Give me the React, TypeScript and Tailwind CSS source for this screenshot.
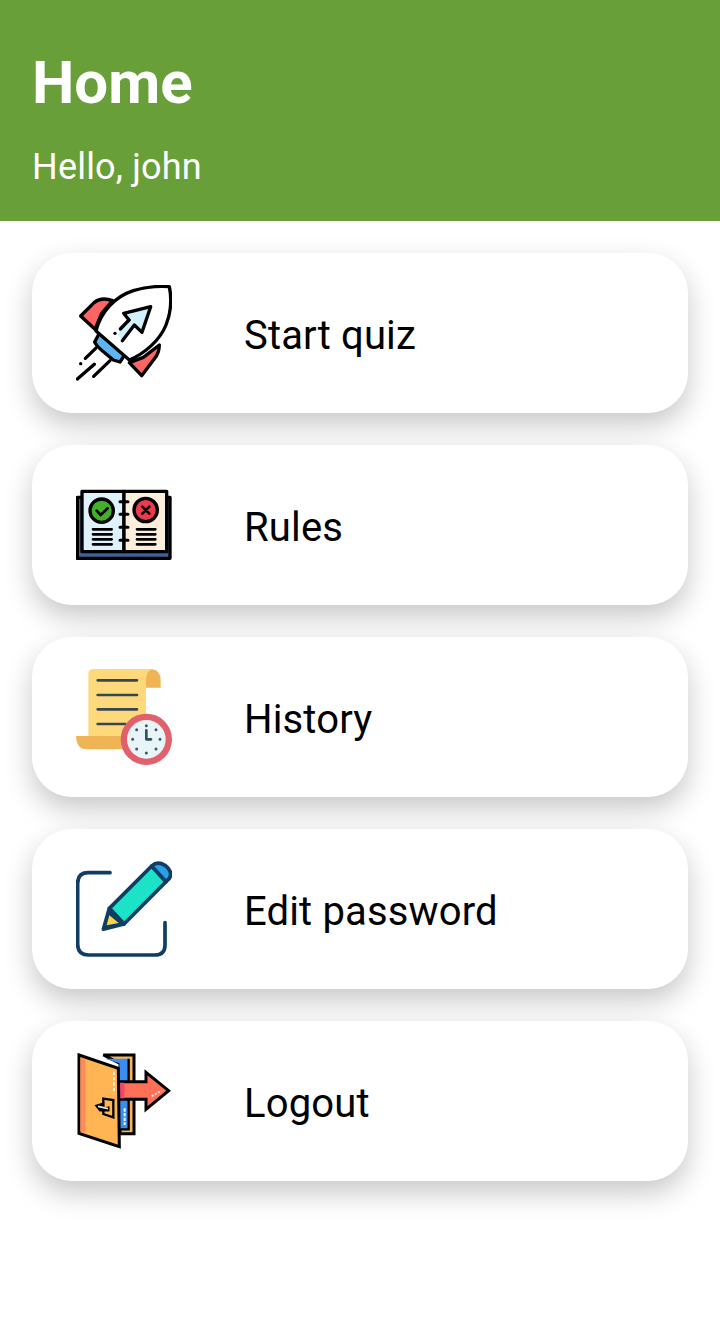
import React from 'react'

const RocketIcon = () => (
  <svg className="h-24 w-24 shrink-0" viewBox="48 45 288 288" fill="none" stroke="#000" strokeWidth="10" strokeLinecap="round" strokeLinejoin="round">
    <path d="M62 138 L103 97 Q125 80 158 92 L125 130 L105 178 Z" fill="#ff6464" />
    <path d="M298 225 Q298 250 282 268 L245 317 L208 278 L250 262 Z" fill="#ff6464" />
    <path d="M118 190 L104 216 Q110 230 124 240 L160 270 L180 276 L197 250 Z" fill="#5cb4f2" />
    <path d="M108 183 C122 125 165 80 220 62 C260 50 300 48 328 50 C336 90 332 130 318 165 C300 210 255 250 208 270 Z" fill="#fff" />
    <path d="M195 130 L271 112 L247 186 L226 165 L185 208 L172 195 L207 152 Z" fill="#d2f1fd" stroke="none" />
    <path d="M207 150 L191 130 L272 110 L246 187 L223 165 L187 212" />
    <path d="M207 150 L181 177" />
    <path d="M165 190 L165 190" />
    <path d="M107 235 L76 265" />
    <path d="M62 281 L62 281" />
    <path d="M103 283 L52 327" />
    <path d="M150 272 L101 319" />
  </svg>
)

const BookIcon = () => (
  <svg className="h-24 w-24 shrink-0" viewBox="48 21 288 288" fill="none" stroke="#000" strokeWidth="10" strokeLinecap="round" strokeLinejoin="round">
    <path d="M52 82 H330 V265 H52 Z" fill="#3d6199" />
    <path d="M66 64 H192 V245 H66 Z" fill="#dff2fc" />
    <path d="M192 64 H320 V245 H192 Z" fill="#fdeedb" />
    <circle cx="125" cy="122" r="35" fill="#43b02a" />
    <path d="M110 122 L122 135 L143 115" strokeWidth="8" fill="none" />
    <circle cx="257" cy="120" r="35" fill="#ed3a4c" />
    <path d="M247 110 L268 131 M268 110 L247 131" strokeWidth="8" />
    <path d="M99 178 H155 M99 193 H155 M99 208 H155 M99 223 H155" strokeWidth="8" />
    <path d="M231 178 H286 M231 193 H286 M231 208 H286 M231 223 H286" strokeWidth="8" />
    <path d="M180 95 H204 M180 133 H204 M180 172 H204 M180 211 H204" strokeWidth="9" />
  </svg>
)

const HistoryIcon = () => (
  <svg className="h-24 w-24 shrink-0" viewBox="48 42 288 288" fill="none" strokeLinecap="round">
    <path d="M275 42 Q302 46 302 75 V98 H258 V70 Q258 48 275 42 Z" fill="#f0b455" />
    <path d="M100 42 H278 Q258 48 258 72 V243 H85 V58 Q85 42 100 42 Z" fill="#fdd97c" />
    <path d="M48 243 H195 V283 H80 Q50 283 48 243 Z" fill="#f0b455" />
    <path d="M113 76 H231 M113 120 H231 M113 163 H231 M113 207 H196" stroke="#37474f" strokeWidth="8" />
    <circle cx="259" cy="253" r="77" fill="#e0606c" />
    <circle cx="259" cy="253" r="58" fill="#e9f4f7" />
    <path d="M259 212 V212 M259 294 V294 M218 253 V253 M300 253 V253 M230 224 V224 M288 224 V224 M230 282 V282 M288 282 V282" stroke="#37596b" strokeWidth="9" />
    <path d="M259 226 V253 H273" stroke="#2d5166" strokeWidth="8" strokeLinejoin="round" />
  </svg>
)

const EditIcon = () => (
  <svg className="h-24 w-24 shrink-0" viewBox="48 33 288 288" fill="none" stroke="#0f3d63" strokeWidth="11" strokeLinecap="round" strokeLinejoin="round">
    <path d="M150 68 H85 Q53 68 53 100 V283 Q53 315 85 315 H285 Q315 315 315 285 V218" />
    <path d="M148 175 L275 48 L318 95 L192 222 Z" fill="#1ce3c8" />
    <path d="M275 48 Q292 32 315 46 Q340 65 328 85 L318 95 Z" fill="#2aa0e8" />
    <path d="M148 175 L130 238 L192 222 Z" fill="#0f3d63" />
    <path d="M148 196 L140 226 L176 219 Z" fill="#f9d648" stroke="none" />
  </svg>
)

const LogoutIcon = () => (
  <svg className="h-24 w-24 shrink-0" viewBox="48 39 288 288" fill="none" stroke="#000" strokeWidth="9" strokeLinejoin="miter">
    <path d="M130 45 H222 V281 H180 V70 Z" fill="#f7b460" />
    <path d="M135 56 H206 V268 H178 V70 Z" fill="#3b8ef0" stroke="none" />
    <path d="M206 56 V268 H178" stroke="#000" strokeWidth="7" />
    <path d="M180 125 H258 V97 L326 152 L258 208 V178 H180 Z" fill="#ff7058" />
    <path d="M180 128 H193 V175 H180 Z" fill="#f0466a" stroke="none" />
    <path d="M275 168 L305 152" stroke="#ffe2c8" strokeWidth="6" strokeDasharray="6 5" />
    <path d="M57 45 L175 85 L178 320 L57 280 Z" fill="#ffb554" />
    <path d="M61 52 L76 57 V279 L61 274 Z" fill="#ff8a5c" stroke="none" />
    <path d="M162 95 V160" stroke="#ffeccb" strokeWidth="6" strokeDasharray="10 6" />
    <path d="M194 205 V255" stroke="#e8f6ff" strokeWidth="6" strokeDasharray="10 4" />
    <path d="M130 176 L160 180 V232 L130 222 Z" fill="#ffb554" strokeWidth="7" />
    <path d="M108 197 L130 190 V205 L146 202 V212 L120 212 Z" fill="#000" stroke="#000" strokeWidth="5" />
    <path d="M114 199 L144 206" stroke="#e4e4e4" strokeWidth="5" />
  </svg>
)

const items = [
  { label: 'Start quiz', Icon: RocketIcon },
  { label: 'Rules', Icon: BookIcon },
  { label: 'History', Icon: HistoryIcon },
  { label: 'Edit password', Icon: EditIcon },
  { label: 'Logout', Icon: LogoutIcon },
]

export default function App() {
  return (
    <div className="min-h-[1343px] bg-white font-['Roboto',sans-serif] text-black">
      <header className="h-[221px] bg-[#689f38] px-8 pt-[48px] text-white">
        <h1 className="text-[60px] leading-[70px] font-bold">Home</h1>
        <p className="mt-[28px] text-[36px] leading-[42px] tracking-[0.2px]">Hello, john</p>
      </header>
      <div className="flex flex-col gap-8 px-8 pt-8">
        {items.map(({ label, Icon }) => (
          <div key={label} className="flex h-40 items-center rounded-[40px] bg-white pl-11 shadow-[0_12px_28px_rgba(0,0,0,0.22)]">
            <Icon />
            <span className="ml-[72px] pt-1 text-[40px] leading-[47px] tracking-[0.15px]">{label}</span>
          </div>
        ))}
      </div>
    </div>
  )
}
